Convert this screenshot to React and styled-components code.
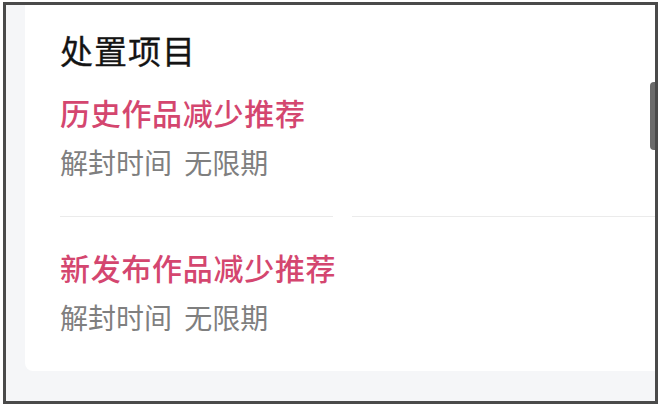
import styled, { createGlobalStyle } from "styled-components";

const Global = createGlobalStyle`
  html, body {
    margin: 0;
    padding: 0;
    background: #ffffff;
  }
  * {
    box-sizing: border-box;
  }
`;

const items = [
  { name: "历史作品减少推荐", period: ["解封时间", "无限期"] },
  { name: "新发布作品减少推荐", period: ["解封时间", "无限期"] },
];

export default function App() {
  return (
    <>
      <Global />
      <Frame>
        <Sheet>
          <Card>
            <Title>处置项目</Title>
            {items.map((item, i) => (
              <Item key={item.name} $first={i === 0}>
                {i > 0 && <Divider />}
                <ItemName>{item.name}</ItemName>
                <Period>
                  {item.period[0]} {item.period[1]}
                </Period>
              </Item>
            ))}
          </Card>
          <ScrollThumb />
        </Sheet>
      </Frame>
    </>
  );
}

// dark outline around the whole panel
const Frame = styled.div`
  width: 655px;
  height: 402px;
  margin: 2px 0 0 3px;
  border: 3px solid #4a4a4a;
  background: #f5f6f8;
  font-family: "Noto Sans CJK SC", "Noto Sans", sans-serif;
  overflow: hidden;
`;

const Sheet = styled.div`
  position: relative;
  height: 100%;
  padding-left: 19px;
`;

const Card = styled.div`
  background: #ffffff;
  padding: 25px 0 36px 35px;
  border-bottom-left-radius: 8px;
`;

const Title = styled.div`
  font-size: 33px;
  line-height: 40px;
  font-weight: 400;
  letter-spacing: 1px;
  color: #141414;
  -webkit-text-stroke: 0.3px #141414;
`;

const Item = styled.div`
  padding-top: ${(p) => (p.$first ? "22px" : "0")};
`;

// thin rule between items, broken once like the list separator
const Divider = styled.div`
  height: 1px;
  margin: 36px 0 30px;
  background: linear-gradient(
    to right,
    #ebebeb 0,
    #ebebeb 273px,
    transparent 273px,
    transparent 292px,
    #ebebeb 292px
  );
`;

const ItemName = styled.div`
  font-size: 30px;
  line-height: 40px;
  font-weight: 500;
  letter-spacing: 0.7px;
  color: #d4466f;
`;

const Period = styled.div`
  margin-top: 12px;
  font-size: 28px;
  line-height: 36px;
  word-spacing: 6px;
  color: #7f7f7f;
`;

// scrollbar handle resting on the right edge
const ScrollThumb = styled.div`
  position: absolute;
  right: 0;
  top: 77px;
  width: 5px;
  height: 68px;
  border-radius: 4px 0 0 4px;
  background: #6b6b6b;
`;
